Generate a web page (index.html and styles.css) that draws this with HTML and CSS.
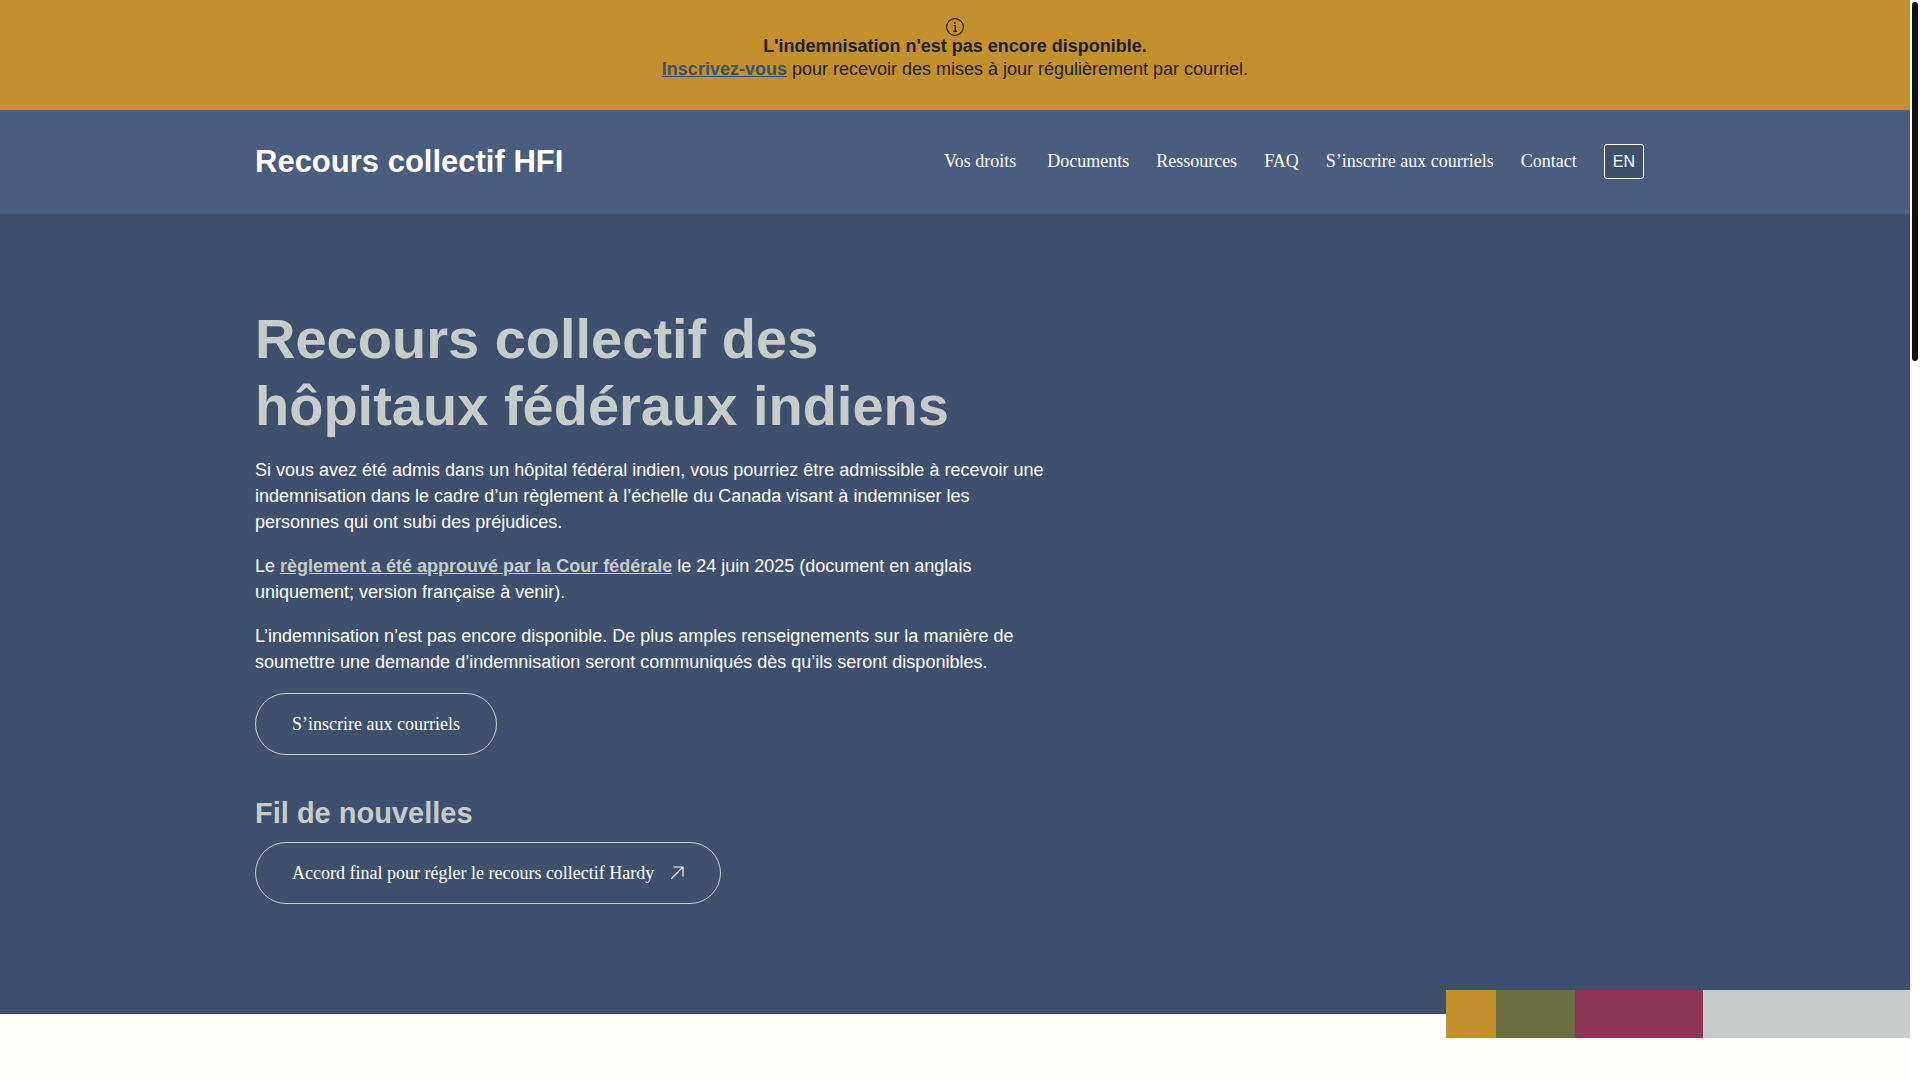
FILE: index.html
```html
<!DOCTYPE html>
<html lang="fr">
<head>
  <meta charset="UTF-8">
  <meta name="viewport" content="width=device-width, initial-scale=1">
  <title>Recours collectif HFI</title>
  <link rel="stylesheet" href="styles.css">
</head>
<body>
  <div class="page">
    <div class="alert">
      <svg class="alert-icon" viewBox="0 0 18 18" aria-hidden="true">
        <circle cx="9" cy="9" r="8.4" />
        <path d="M7.2 7.5h2v5.6M7 13.3h4.2" />
        <circle class="dot" cx="8.8" cy="4.9" r="0.9" />
      </svg>
      <p><strong>L'indemnisation n'est pas encore disponible.</strong></p>
      <p><a href="#">Inscrivez-vous</a> pour recevoir des mises à jour régulièrement par courriel.</p>
    </div>

    <header class="header">
      <div class="container header-inner">
        <a class="logo" href="#">Recours collectif HFI</a>
        <nav class="nav">
          <a class="has-menu" href="#">Vos droits</a>
          <a href="#">Documents</a>
          <a href="#">Ressources</a>
          <a href="#">FAQ</a>
          <a href="#">S’inscrire aux courriels</a>
          <a href="#">Contact</a>
          <a class="lang" href="#">EN</a>
        </nav>
      </div>
    </header>

    <main>
      <section class="hero">
        <div class="container">
          <div class="hero-text">
            <h1>Recours collectif des hôpitaux fédéraux indiens</h1>
            <p>Si vous avez été admis dans un hôpital fédéral indien, vous pourriez être admissible à recevoir une indemnisation dans le cadre d’un règlement à l’échelle du Canada visant à indemniser les personnes qui ont subi des préjudices.</p>
            <p>Le <a href="#">règlement a été approuvé par la Cour fédérale</a> le 24 juin 2025 (document en anglais uniquement; version française à venir).</p>
            <p>L’indemnisation n’est pas encore disponible. De plus amples renseignements sur la manière de soumettre une demande d’indemnisation seront communiqués dès qu’ils seront disponibles.</p>
            <a class="btn" href="#">S’inscrire aux courriels</a>
            <h2>Fil de nouvelles</h2>
            <a class="btn" href="#">
              Accord final pour régler le recours collectif Hardy
              <svg class="arrow" viewBox="0 0 14 14" aria-hidden="true">
                <path d="M1 13L13 1M3.5 1h9.5v9.5" />
              </svg>
            </a>
          </div>
        </div>
        <div class="stripes">
          <span class="gold"></span>
          <span class="olive"></span>
          <span class="wine"></span>
          <span class="grey"></span>
        </div>
      </section>
    </main>
  </div>
  <div class="scroll-track"><div class="scroll-thumb"></div></div>
</body>
</html>
```
FILE: styles.css
```css
* {
  margin: 0;
  padding: 0;
  box-sizing: border-box;
}
body {
  background: #fffefa;
  color: #231f20;
  font-family: "Liberation Sans", Arial, sans-serif;
  font-size: 18px;
  line-height: 26px;
}
.page {
  min-height: 100vh;
  margin-right: 10px;
}
.container {
  max-width: 1400px;
  margin: 0 auto;
}

/* top alert */
.alert {
  background: #c2902c;
  padding: 18px 20px 29px;
  text-align: center;
  line-height: 23px;
}
.alert-icon {
  display: block;
  width: 18px;
  height: 18px;
  margin: 0 auto -1px;
  fill: none;
  stroke: #231f20;
  stroke-width: 1.2;
}
.alert-icon .dot {
  fill: #231f20;
  stroke: none;
}
.alert a {
  color: #3f506e;
  font-weight: bold;
}

/* header */
.header {
  background: #495d7e;
  padding: 34px 0 35px;
}
.header-inner {
  display: flex;
  align-items: center;
  justify-content: space-between;
  padding-right: 11px;
}
.logo {
  color: #fffefa;
  font-size: 31px;
  line-height: 34px;
  font-weight: bold;
  text-decoration: none;
}
.nav {
  display: flex;
  align-items: center;
  gap: 27px;
}
.nav a {
  color: #fffefa;
  font-family: "Liberation Serif", "Times New Roman", serif;
  line-height: 25px;
  text-decoration: none;
}
.nav .has-menu {
  padding-right: 4px;
}
.nav .lang {
  background: #3f506e;
  border: 1px solid #fffefa;
  border-radius: 3px;
  padding: 4px 8px;
  font-family: "Liberation Sans", Arial, sans-serif;
  font-size: 16px;
}

/* hero */
.hero {
  position: relative;
  background: #3f506e;
  color: #fffefa;
  padding: 91px 0 110px;
}
.hero-text {
  max-width: 795px;
}
.hero h1,
.hero h2,
.hero p a {
  color: #c7cbc9;
}
.hero h1 {
  font-size: 56px;
  line-height: 67px;
  margin-bottom: 18px;
}
.hero h2 {
  font-size: 29px;
  line-height: 34px;
  margin: 41px 0 12px;
}
.hero p {
  margin-bottom: 18px;
}
.hero p a {
  font-weight: bold;
}
.btn {
  display: flex;
  align-items: center;
  gap: 16px;
  width: fit-content;
  border: 1px solid #c7cbc9;
  border-radius: 31px;
  padding: 17px 36px;
  color: #fffefa;
  font-family: "Liberation Serif", "Times New Roman", serif;
  text-decoration: none;
}
.arrow {
  width: 14px;
  height: 14px;
  fill: none;
  stroke: #fffefa;
  stroke-width: 1.2;
}
.stripes {
  position: absolute;
  right: 0;
  bottom: -24px;
  display: flex;
  height: 48px;
}
.gold {
  width: 50px;
  background: #c2902c;
}
.olive {
  width: 79px;
  background: #696d3f;
}
.wine {
  width: 128px;
  background: #8e3456;
}
.grey {
  width: 207px;
  background: #c7cbc9;
}

/* scrollbar */
.scroll-track {
  position: fixed;
  top: 0;
  right: 0;
  bottom: 0;
  width: 10px;
  padding: 2px;
  background: #ffffff;
}
.scroll-thumb {
  height: 359px;
  border-radius: 3px;
  background: #111111;
}
```
